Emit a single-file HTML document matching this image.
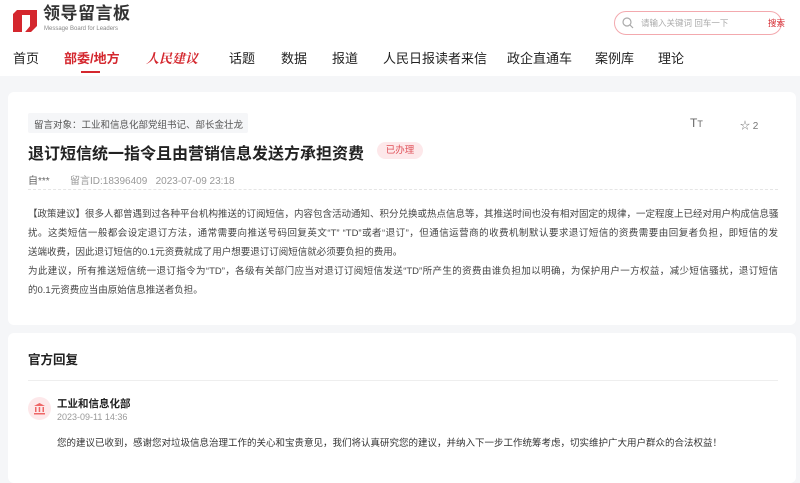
<!DOCTYPE html>
<html><head><meta charset="utf-8"><style>
*{margin:0;padding:0;box-sizing:border-box}
body{width:800px;height:475px;overflow:hidden;background:#f5f6f8;font-family:"Liberation Sans","Noto Sans CJK SC",sans-serif;color:#333;position:relative}
.hdr{position:absolute;left:0;top:0;width:800px;height:76px;background:#fff}
.abs{position:absolute;white-space:nowrap}
.nav{top:48px;font-size:13px;color:#222}
.card{position:absolute;background:#fff;border-radius:6px}
.line{position:absolute;left:28px;width:750px;font-size:9.5px;color:#444;white-space:nowrap;text-align:justify;text-align-last:justify}
</style></head><body>
<div class="hdr">
  <svg class="abs" style="left:13px;top:10px" width="24" height="22" viewBox="0 0 24 22"><path d="M4 0H24V16L18 22H12L17 16V5H9V22H0V4Z" fill="#d4272e"/><path d="M9 5H17V16L12 22H9Z" fill="#fff"/></svg>
  <div class="abs" style="left:43px;top:3px;font-size:17px;line-height:22px;font-weight:bold;color:#333;letter-spacing:0.5px">领导留言板</div>
  <div class="abs" style="left:44px;top:26px;font-size:6px;line-height:7px;color:#888">Message Board for Leaders</div>
  <div class="abs" style="left:614px;top:11px;width:168px;height:24px;border:1px solid #f3a9ae;border-radius:12px"></div>
  <svg class="abs" style="left:622px;top:17px" width="12" height="12" viewBox="0 0 12 12"><circle cx="5" cy="5" r="4" fill="none" stroke="#aaa" stroke-width="1.2"/><path d="M8 8L11 11" stroke="#aaa" stroke-width="1.2"/></svg>
  <div class="abs" style="left:641px;top:17px;font-size:8.5px;color:#aaa">请输入关键词 回车一下</div>
  <div class="abs" style="left:768px;top:17px;font-size:8.5px;color:#d4272e">搜索</div>
  <div class="abs nav" style="left:13px">首页</div>
  <div class="abs nav" style="left:64px;color:#d4272e;font-weight:bold">部委/地方</div>
  <div class="abs" style="left:81px;top:71px;width:19px;height:2px;background:#d4272e"></div>
  <div class="abs nav" style="left:146px;color:#d4272e;font-style:italic;font-weight:bold;font-family:'Noto Serif CJK SC',serif">人民建议</div>
  <div class="abs nav" style="left:229px">话题</div>
  <div class="abs nav" style="left:281px">数据</div>
  <div class="abs nav" style="left:332px">报道</div>
  <div class="abs nav" style="left:383px">人民日报读者来信</div>
  <div class="abs nav" style="left:507px">政企直通车</div>
  <div class="abs nav" style="left:595px">案例库</div>
  <div class="abs nav" style="left:658px">理论</div>
</div>
<div class="card" style="left:8px;top:92px;width:788px;height:233px"></div>
<div class="abs" style="left:28px;top:113px;width:220px;height:20px;background:#f5f6f8;border-radius:2px"></div>
<div class="abs" style="left:34px;top:117px;font-size:9.5px;color:#555">留言对象：工业和信息化部党组书记、部长金壮龙</div>
<div class="abs" style="left:28px;top:140px;font-size:16px;font-weight:bold;color:#222">退订短信统一指令且由营销信息发送方承担资费</div>
<div class="abs" style="left:377px;top:142px;width:46px;height:17px;background:#fde8ea;border-radius:9px;font-size:9.5px;color:#e0525a;text-align:center;line-height:17px">已办理</div>
<div class="abs" style="left:690px;top:116px;font-size:12px;color:#666">T<span style="font-size:9px">T</span></div>
<div class="abs" style="left:740px;top:117px;font-size:10px;color:#777">☆ 2</div>
<div class="abs" style="left:28px;top:172px;font-size:10px;color:#666">自***</div>
<div class="abs" style="left:70px;top:172px;font-size:10px;color:#999">留言ID:18396409&nbsp;&nbsp;&nbsp;2023-07-09 23:18</div>
<div class="abs" style="left:28px;top:189px;width:750px;border-top:1px dashed #e5e5e5"></div>
<div class="line" style="top:206px">【政策建议】很多人都曾遇到过各种平台机构推送的订阅短信，内容包含活动通知、积分兑换或热点信息等，其推送时间也没有相对固定的规律，一定程度上已经对用户构成信息骚</div>
<div class="line" style="top:225px">扰。这类短信一般都会设定退订方法，通常需要向推送号码回复英文“T” “TD”或者“退订”，但通信运营商的收费机制默认要求退订短信的资费需要由回复者负担，即短信的发</div>
<div class="line" style="top:244px;width:auto;text-align-last:auto">送端收费，因此退订短信的0.1元资费就成了用户想要退订订阅短信就必须要负担的费用。</div>
<div class="line" style="top:263px">为此建议，所有推送短信统一退订指令为“TD”，各级有关部门应当对退订订阅短信发送“TD”所产生的资费由谁负担加以明确，为保护用户一方权益，减少短信骚扰，退订短信</div>
<div class="line" style="top:282px;width:auto;text-align-last:auto">的0.1元资费应当由原始信息推送者负担。</div>
<div class="card" style="left:8px;top:333px;width:788px;height:150px"></div>
<div class="abs" style="left:28px;top:349px;font-size:12.5px;font-weight:bold;color:#222">官方回复</div>
<div class="abs" style="left:28px;top:380px;width:750px;border-top:1px solid #eee"></div>
<div class="abs" style="left:28px;top:397px;width:23px;height:23px;border-radius:50%;background:#fde8ea"></div>
<svg class="abs" style="left:33px;top:402px" width="13" height="13" viewBox="0 0 13 13"><path d="M6.5 1L12 4H1Z" fill="#e66"/><rect x="2" y="5" width="1.5" height="5" fill="#e66"/><rect x="5.7" y="5" width="1.5" height="5" fill="#e66"/><rect x="9.5" y="5" width="1.5" height="5" fill="#e66"/><rect x="1" y="11" width="11" height="1.5" fill="#e66"/></svg>
<div class="abs" style="left:57px;top:396px;font-size:10.5px;font-weight:bold;color:#222">工业和信息化部</div>
<div class="abs" style="left:57px;top:412px;font-size:9px;color:#999">2023-09-11 14:36</div>
<div class="abs" style="left:57px;top:435px;font-size:9.5px;color:#333">您的建议已收到，感谢您对垃圾信息治理工作的关心和宝贵意见，我们将认真研究您的建议，并纳入下一步工作统筹考虑，切实维护广大用户群众的合法权益！</div>
</body></html>
